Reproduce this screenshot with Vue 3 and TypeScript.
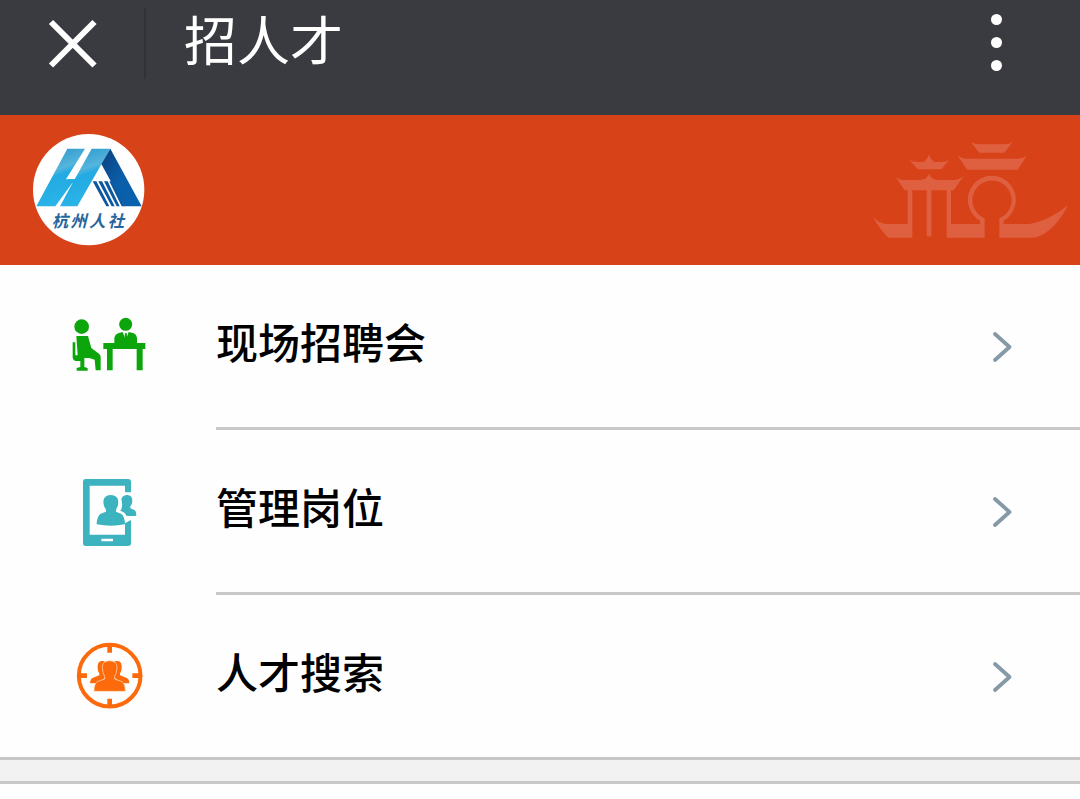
<script setup lang="ts">
interface MenuItem {
  icon: 'fair' | 'jobs' | 'search'
  label: string
}

const title = '招人才'

const items: MenuItem[] = [
  { icon: 'fair', label: '现场招聘会' },
  { icon: 'jobs', label: '管理岗位' },
  { icon: 'search', label: '人才搜索' },
]
</script>

<template>
  <div class="page">
    <header class="topbar">
      <button class="close" aria-label="关闭">
        <svg viewBox="0 0 48 48" width="48" height="48">
          <path d="M3 3L46.5 46.5M46.5 3L3 46.5" stroke="#fff" stroke-width="6" fill="none" />
        </svg>
      </button>
      <span class="divider" />
      <h1 class="title">{{ title }}</h1>
      <button class="more" aria-label="更多">
        <i v-for="n in 3" :key="n" class="dot" />
      </button>
    </header>

    <div class="banner">
      <svg class="logo" viewBox="38 26 336 336">
        <defs>
          <linearGradient id="light" x1="0" y1="0" x2="0.3" y2="1">
            <stop offset="0" stop-color="#2492c8" />
            <stop offset="0.45" stop-color="#55b5dc" />
            <stop offset="0.55" stop-color="#22aae2" />
            <stop offset="1" stop-color="#2bb4e8" />
          </linearGradient>
          <linearGradient id="dark" x1="0" y1="0" x2="1" y2="1">
            <stop offset="0" stop-color="#0b3f7c" />
            <stop offset="0.5" stop-color="#0a5ea8" />
            <stop offset="1" stop-color="#0962ae" />
          </linearGradient>
        </defs>
        <circle cx="205" cy="193" r="167" fill="#fff" />
        <path d="M141 70H194L137 162H164L105 243H48Z" fill="url(#light)" />
        <path d="M214 70H270L171 243H119L157 172H135L143 162H163Z" fill="url(#light)" />
        <path d="M270 70L364 243H312L243 116Z" fill="url(#dark)" />
        <path d="M217 168H228L267 243H258ZM234 168H245L283 243H274ZM251 168H262L298 243H289ZM267 168H274L313 243H304Z" fill="#0b57a0" />
        <text class="logo-text" x="94" y="304">杭州人社</text>
      </svg>

      <svg class="emblem" viewBox="30 30 600 300">
        <g fill="#de6040">
          <path d="M332 36Q344 43 358 43H435Q448 43 458 36L433 68H358Z" />
          <path d="M291 74Q304 86 322 86H473Q491 86 501 76L473 119H322Z" />
          <path d="M148 90Q158 96 172 96H190Q202 90 207 73Q212 90 224 96H244Q258 96 267 90L244 118H173Z" />
          <path d="M105 138Q116 150 132 150H181Q201 148 207 131Q213 148 235 150H279Q297 150 311 138L281 181H134Z" />
          <path d="M143 180H157V323H86Q66 308 39 262Q59 281 80 282H143Z" />
          <path d="M200 180H214V319H200Z" />
          <path d="M260 180H273V282H360V272A72 72 0 1 1 431 272V282H509Q565 273 624 226Q590 292 547 314Q532 323 515 323H418V265A59 59 0 1 0 374 265V323H260Z" />
        </g>
      </svg>
    </div>

    <ul class="menu">
      <li v-for="item in items" :key="item.label" class="row">
        <div class="row-icon">
          <svg v-if="item.icon === 'fair'" viewBox="30 3 240 240" fill="#0ca50c">
            <circle cx="65" cy="65" r="22" />
            <path d="M49 93H84L94 129L117 146Q122 150 122 156V196H107L104 164L88 159H73V186L83 189V197H50V189L61 186V168H47Q38 166 38 156V112H46V151H53Z" />
            <circle cx="197" cy="58" r="19.5" />
            <path d="M163 115V100Q164 88 177 84L188 81L197 106L206 81L219 84Q230 88 231 100V115Z" />
            <path d="M195 84H200L202 107L197 114L192 107Z" />
            <path d="M130 114H256V132H248V196H230V132H158V196H141V132H130Z" />
          </svg>

          <svg v-else-if="item.icon === 'jobs'" viewBox="0 3 240 240">
            <path fill="#3cb3be" fill-rule="evenodd" d="M47 27H174Q183 27 183 36V67H165V47H59V194H165V160L183 150V219Q183 228 174 228H47Q39 228 39 219V36Q39 27 47 27ZM94 206V214H129V206Z" />
            <path fill="#3cb3be" d="M154 87Q158 75 172 75Q187 76 187 92Q187 102 181 109V115L193 120Q199 124 199 137Q187 139 169 137Q166 127 151 122Q160 111 154 87Z" />
            <path fill="#3cb3be" d="M122 75Q145 76 145 96Q145 110 138 119V125L153 131Q164 137 165 163Q123 171 80 163Q81 137 92 131L108 125V119Q100 109 100 96Q100 76 122 75Z" />
          </svg>

          <svg v-else viewBox="15 3 240 240">
            <circle cx="134" cy="122" r="92.5" fill="none" stroke="#fd6a0b" stroke-width="12" />
            <path d="M134 29V53M134 215V191M41 122H66M227 122H202" fill="none" stroke="#fd6a0b" stroke-width="14" />
            <path fill="#fd6a0b" d="M119 79Q99 74 98 93Q97 108 103 115V121L84 128Q75 132 75 145H100L123 126Z" />
            <path fill="#fd6a0b" d="M149 79Q169 74 170 93Q171 108 165 115V121L184 128Q193 132 193 145H168L145 126Z" />
            <path fill="#fd6a0b" stroke="#ffe2c6" stroke-width="2" d="M134 77Q157 78 156 98Q155 116 149 124V132L171 140Q181 145 181 169H87Q87 145 97 140L119 132V124Q113 116 112 98Q111 78 134 77Z" />
          </svg>
        </div>
        <div class="row-body">
          <span class="label">{{ item.label }}</span>
          <svg class="chevron" viewBox="0 0 22 32" width="22" height="32">
            <path d="M3 3L17.5 16L3 29" fill="none" stroke="#8599a6" stroke-width="3.8" stroke-linecap="round" stroke-linejoin="round" />
          </svg>
        </div>
      </li>
    </ul>

    <div class="gap" />
  </div>
</template>

<style>
body {
  margin: 0;
  background: #fefefe;
}
</style>

<style scoped>
.page {
  height: 799px;
  overflow: hidden;
  background: #fefefe;
  font-family: 'Noto Sans CJK SC', 'Noto Sans', sans-serif;
}

.topbar {
  display: flex;
  align-items: flex-start;
  box-sizing: border-box;
  height: 115px;
  padding: 8px 78px 0 48px;
  background: #3a3b40;
}
.close,
.more {
  padding: 0;
  border: none;
  background: transparent;
  cursor: pointer;
}
.close {
  height: 48px;
  margin-top: 11px;
}
.close svg {
  display: block;
  overflow: visible;
}
.divider {
  width: 2px;
  height: 71px;
  margin-left: 48px;
  background: #313237;
}
.title {
  margin: -8px 0 0 38px;
  font-size: 53px;
  font-weight: 400;
  line-height: 76px;
  color: #fff;
}
.more {
  display: flex;
  flex-direction: column;
  gap: 12px;
  margin: 6px 0 0 auto;
}
.dot {
  width: 11px;
  height: 11px;
  border-radius: 50%;
  background: #fff;
}

.banner {
  display: flex;
  align-items: center;
  justify-content: space-between;
  box-sizing: border-box;
  height: 150px;
  padding: 0 10px 0 33px;
  background: #d84218;
}
.logo {
  width: 112px;
  height: 112px;
}
.logo-text {
  font-size: 49px;
  font-weight: 700;
  font-style: italic;
  letter-spacing: 7px;
  fill: #26659c;
}
.emblem {
  width: 200px;
  height: 100px;
}

.menu {
  margin: 0;
  padding: 0;
  list-style: none;
  border-bottom: 3px solid #c6c6c6;
}
.row {
  display: flex;
  height: 165px;
}
.row:last-child {
  height: 162px;
}
.row-icon {
  display: flex;
  align-items: center;
  width: 216px;
  height: 162px;
  box-sizing: border-box;
  padding-left: 70px;
}
.row-icon svg {
  width: 80px;
  height: 80px;
}
.row-body {
  flex: 1;
  display: flex;
  align-items: center;
  justify-content: space-between;
  padding-right: 66px;
  border-bottom: 3px solid #c8c8c8;
}
.row:last-child .row-body {
  border-bottom: none;
}
.label {
  font-size: 42px;
  font-weight: 500;
  line-height: 60px;
  color: #000;
  padding-bottom: 10px;
}
.chevron {
  margin-top: 2px;
}

.gap {
  height: 21px;
  background: #f2f2f2;
  border-bottom: 3px solid #c8c8c8;
}
</style>
